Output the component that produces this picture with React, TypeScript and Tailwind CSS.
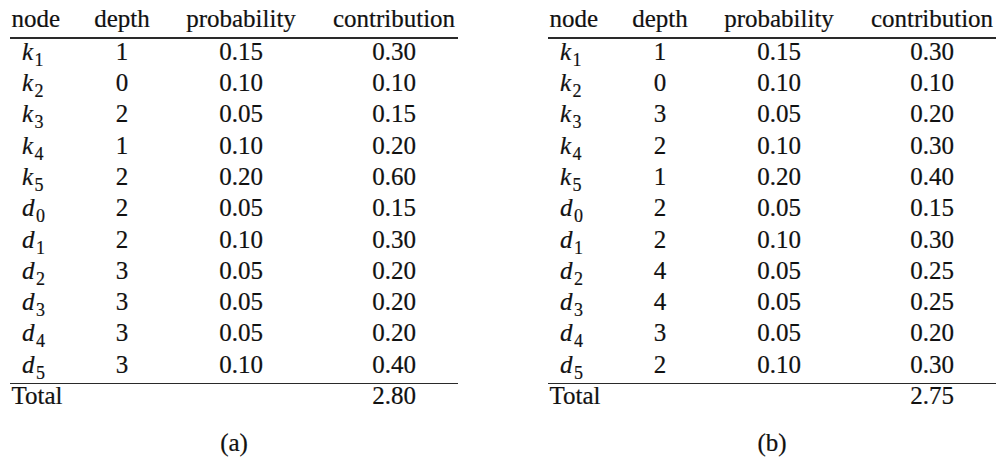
const tableA = {
  caption: "(a)",
  total: "2.80",
  rows: [
    ["k", "1", "1", "0.15", "0.30"],
    ["k", "2", "0", "0.10", "0.10"],
    ["k", "3", "2", "0.05", "0.15"],
    ["k", "4", "1", "0.10", "0.20"],
    ["k", "5", "2", "0.20", "0.60"],
    ["d", "0", "2", "0.05", "0.15"],
    ["d", "1", "2", "0.10", "0.30"],
    ["d", "2", "3", "0.05", "0.20"],
    ["d", "3", "3", "0.05", "0.20"],
    ["d", "4", "3", "0.05", "0.20"],
    ["d", "5", "3", "0.10", "0.40"],
  ],
};

const tableB = {
  caption: "(b)",
  total: "2.75",
  rows: [
    ["k", "1", "1", "0.15", "0.30"],
    ["k", "2", "0", "0.10", "0.10"],
    ["k", "3", "3", "0.05", "0.20"],
    ["k", "4", "2", "0.10", "0.30"],
    ["k", "5", "1", "0.20", "0.40"],
    ["d", "0", "2", "0.05", "0.15"],
    ["d", "1", "2", "0.10", "0.30"],
    ["d", "2", "4", "0.05", "0.25"],
    ["d", "3", "4", "0.05", "0.25"],
    ["d", "4", "3", "0.05", "0.20"],
    ["d", "5", "2", "0.10", "0.30"],
  ],
};

type TableData = typeof tableA;

const cols = "grid grid-cols-[62px_100px_138px_148px]";

function CostTable({ data }: { data: TableData }) {
  return (
    <div className="w-[448px]">
      <div className={`${cols} leading-[31.3px]`}>
        <div className="pl-[1.5px]">node</div>
        <div className="text-center">depth</div>
        <div className="text-center">probability</div>
        <div className="pl-5 text-center">contribution</div>
      </div>
      <div className="mt-[3px] h-[1.5px] bg-[#2a2a2a]" />
      <div className="-mt-[3px]">
        {data.rows.map(([sym, idx, depth, prob, contrib], i) => (
          <div key={i} className={`${cols} leading-[31.3px]`}>
            <div className="pl-3">
              <span className="italic">{sym}</span>
              <sub className="ml-[1.5px] text-[18px] bottom-[-6px]">{idx}</sub>
            </div>
            <div className="text-center">{depth}</div>
            <div className="text-center">{prob}</div>
            <div className="pl-5 text-center">{contrib}</div>
          </div>
        ))}
      </div>
      <div className="mt-[2.5px] h-[1.5px] bg-[#2a2a2a]" />
      <div className={`${cols} leading-[24px]`}>
        <div className="pl-[1.5px]">Total</div>
        <div />
        <div />
        <div className="pl-5 text-center">{data.total}</div>
      </div>
      <div className="mt-[22.5px] text-center leading-[24px]">{data.caption}</div>
    </div>
  );
}

export default function App() {
  return (
    <div className="h-[461px] w-[1008px] overflow-hidden bg-white [font-family:'Liberation_Serif',serif] text-[25px] text-[#111] [-webkit-text-stroke:0.2px_#111]">
      <div className="flex gap-[90px] pl-[10px] pt-[3px]">
        <CostTable data={tableA} />
        <CostTable data={tableB} />
      </div>
    </div>
  );
}
